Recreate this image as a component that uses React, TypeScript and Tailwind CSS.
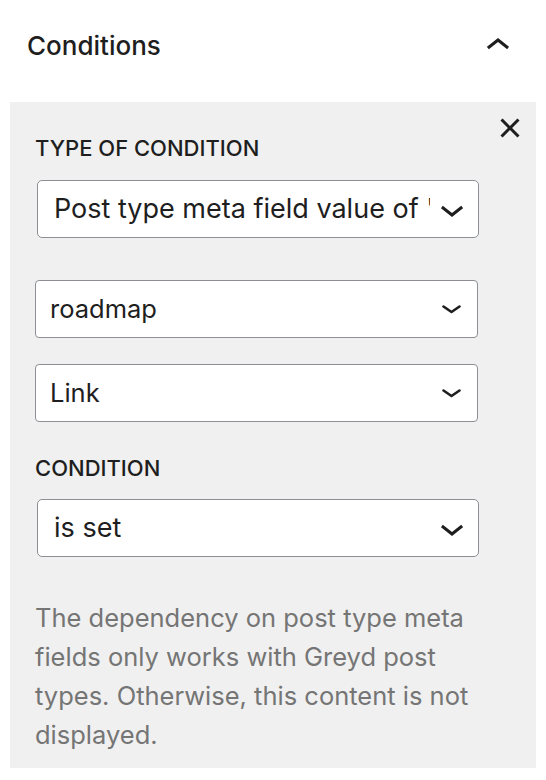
import React from "react";

const font = { fontFamily: "Inter, 'Noto Sans', sans-serif" };

function ChevronDownWp() {
  return (
    <svg width="48" height="48" viewBox="0 0 24 24" className="-ml-[2px] shrink-0 fill-[#1e1e1e]">
      <path d="M17.5 11.6L12 16l-5.5-4.4.9-1.2L12 14l4.6-3.6 1 1.2z" />
    </svg>
  );
}

function ChevronDownSmall() {
  return (
    <svg width="19" height="9" viewBox="0 0 19 9" className="shrink-0">
      <polyline points="1.5,1.5 9.5,7 17.5,1.5" fill="none" stroke="#1e1e1e" strokeWidth="2.6" strokeLinecap="round" strokeLinejoin="round" />
    </svg>
  );
}

function WpSelect({ value }: { value: string }) {
  return (
    <div className="ml-[2px] flex h-[58px] w-[442px] items-center rounded-[5px] border border-[#8c8f94] bg-white pl-[16px] pr-[2px]">
      <div className="min-w-0 flex-1 overflow-hidden whitespace-nowrap text-[27px] leading-[34px] text-[#1e1e1e]">
        {value}
      </div>
      <ChevronDownWp />
    </div>
  );
}

function PlainSelect({ value }: { value: string }) {
  return (
    <div className="flex h-[58px] w-[443px] items-center rounded-[4px] border-[1.5px] border-[#8c8f94] bg-white pl-[14px] pr-[16px]">
      <div className="flex-1 text-[25.5px] leading-[32px] text-[#1e1e1e]">{value}</div>
      <ChevronDownSmall />
    </div>
  );
}

export default function App() {
  return (
    <div style={font} className="h-[780px] w-[546px] bg-white">
      {/* Panel header */}
      <div className="flex h-[102px] items-start justify-between pl-[27px] pr-[24px]">
        <h2 className="mt-[30px] text-[26px] font-medium leading-[32px] text-[#1e1e1e]">Conditions</h2>
        <button className="mt-[22px]">
          <svg width="48" height="48" viewBox="0 0 24 24" className="fill-[#1e1e1e]">
            <path d="M6.5 12.4L12 8l5.5 4.4-.9 1.2L12 10l-4.6 3.6-1-1.2z" />
          </svg>
        </button>
      </div>

      {/* Condition box */}
      <div className="relative mx-[10px] bg-[#f0f0f0] px-[25px] pb-[14px] pt-[34px]">
        <button className="absolute right-[2px] top-[2px]">
          <svg width="48" height="48" viewBox="0 0 24 24" className="fill-[#1e1e1e]">
            <path d="M12 13.06l3.712 3.713 1.061-1.06L13.061 12l3.712-3.712-1.06-1.06L12 10.938 8.288 7.227l-1.061 1.06L10.939 12l-3.712 3.712 1.06 1.061L12 13.061z" />
          </svg>
        </button>

        <div className="text-[22px] font-medium uppercase leading-[24px] text-[#1e1e1e]">Type of condition</div>
        <div className="mt-[20px]">
          <WpSelect value="Post type meta field value of 'roadmap'" />
        </div>

        <div className="mt-[42px]">
          <PlainSelect value="roadmap" />
        </div>
        <div className="mt-[26px]">
          <PlainSelect value="Link" />
        </div>

        <div className="mt-[34px] text-[22px] font-medium uppercase leading-[24px] text-[#1e1e1e]">Condition</div>
        <div className="mt-[19px]">
          <WpSelect value="is set" />
        </div>

        <p className="mt-[41px] w-[450px] text-[25.5px] leading-[39px] text-[#757575]">
          The dependency on post type meta fields only works with Greyd post types. Otherwise, this content is not
          displayed.
        </p>
      </div>
    </div>
  );
}
